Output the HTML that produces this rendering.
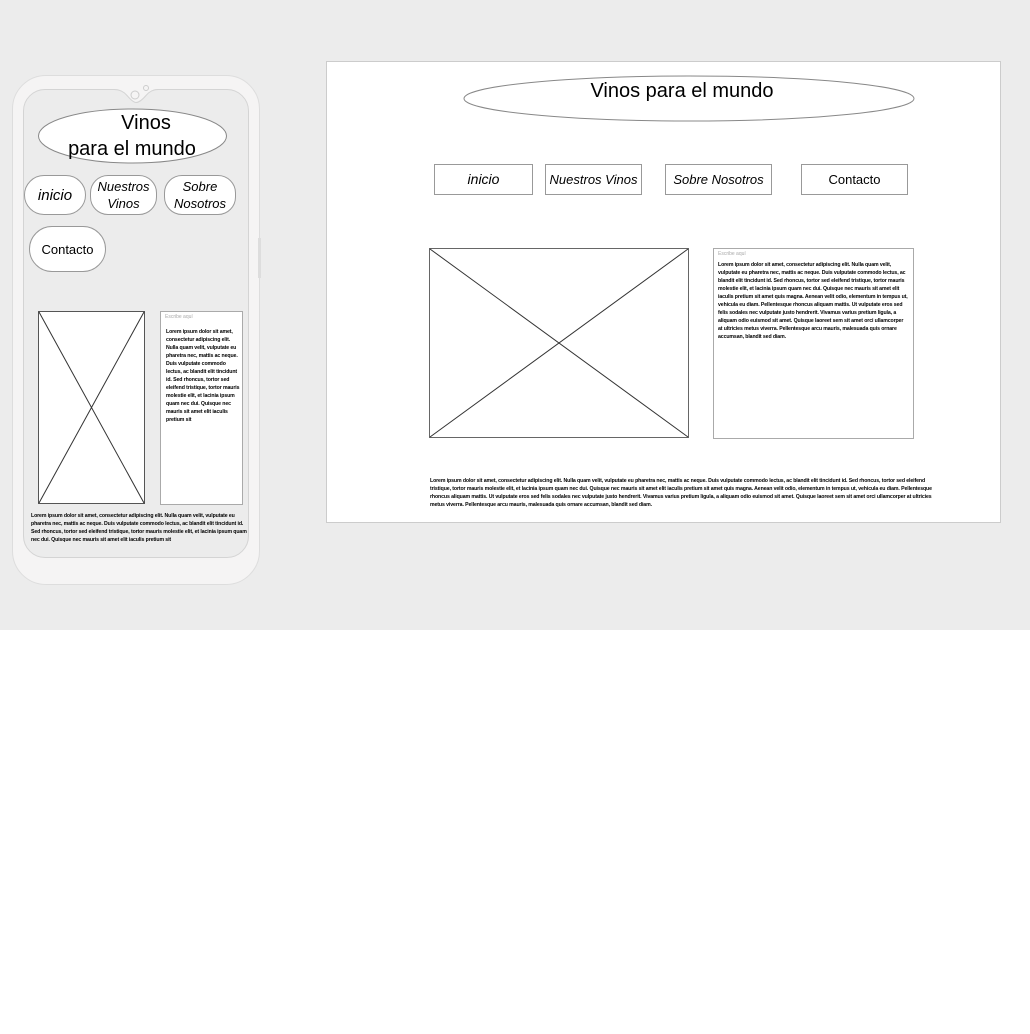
<!DOCTYPE html>
<html><head><meta charset="utf-8"><style>
*{margin:0;padding:0;box-sizing:border-box}
body{width:1030px;height:1034px;background:#fff;position:relative;overflow:hidden;font-family:"Liberation Sans",sans-serif;color:#000}
.a{position:absolute}
.btn{position:absolute;background:#fff;border:1px solid #999;display:flex;align-items:center;justify-content:center;text-align:center;line-height:17px}
.t{font-size:5.2px;font-weight:bold;line-height:8px;letter-spacing:-0.1px}
.ph{font-size:5px;color:#aaa;position:absolute;left:4px;top:2px}
</style></head><body>
<div class="a" style="left:0;top:0;width:1030px;height:630px;background:#ececec"></div>
<!-- phone -->
<div class="a" style="left:12px;top:75px;width:248px;height:510px;background:#f5f4f4;border:1px solid #ddd;border-radius:34px"></div>
<div class="a" style="left:258px;top:238px;width:3px;height:40px;background:#ddd"></div>
<div class="a" style="left:23px;top:89px;width:226px;height:469px;background:#ececec;border:1px solid #d4d4d4;border-radius:22px"></div>
<svg class="a" style="left:100px;top:80px" width="72" height="30"><path d="M0 9 L14 9 Q22 9 27 15 Q33 22 36 22 Q40 22 46 15 Q51 9 58 9 L72 9 L72 0 L0 0 Z" fill="#f5f4f4"/><path d="M0 9.5 L14 9.5 Q22 9.5 27 15.5 Q33 22.5 36 22.5 Q40 22.5 46 15.5 Q51 9.5 58 9.5 L72 9.5" fill="none" stroke="#d4d4d4"/><circle cx="35" cy="15" r="4" fill="none" stroke="#ccc"/><circle cx="46" cy="8" r="2.5" fill="none" stroke="#ccc"/></svg>
<svg class="a" style="left:37px;top:108px" width="191" height="57"><ellipse cx="95.5" cy="28" rx="94" ry="27" fill="#fff" stroke="#888"/></svg>
<div class="a" style="left:38px;top:110px;width:188px;text-align:center;font-size:20px;line-height:26px"><span style="padding-left:28px">Vinos</span><br>para el mundo</div>
<div class="btn" style="left:24px;top:175px;width:62px;height:40px;border-radius:20px;font-size:15px;font-style:italic">inicio</div>
<div class="btn" style="left:90px;top:175px;width:67px;height:40px;border-radius:18px;font-size:13px;font-style:italic">Nuestros<br>Vinos</div>
<div class="btn" style="left:164px;top:175px;width:72px;height:40px;border-radius:18px;font-size:13px;font-style:italic">Sobre<br>Nosotros</div>
<div class="btn" style="left:29px;top:226px;width:77px;height:46px;border-radius:23px;font-size:13px">Contacto</div>
<svg class="a" style="left:38px;top:311px" width="108" height="194"><rect x="0.5" y="0.5" width="106" height="192" fill="#fff" stroke="#555"/><path d="M1 1L106 192M106 1L1 192" stroke="#333"/></svg>
<div class="a" style="left:160px;top:311px;width:83px;height:194px;background:#fff;border:1px solid #aaa"><span class="ph">Escribe aquí</span><div class="t" style="position:absolute;left:5px;top:16px;width:75px">Lorem ipsum dolor sit amet, consectetur adipiscing elit. Nulla quam velit, vulputate eu pharetra nec, mattis ac neque. Duis vulputate commodo lectus, ac blandit elit tincidunt id. Sed rhoncus, tortor sed eleifend tristique, tortor mauris molestie elit, et lacinia ipsum quam nec dui. Quisque nec mauris sit amet elit iaculis pretium sit</div></div>
<div class="a t" style="left:31px;top:512px;width:220px">Lorem ipsum dolor sit amet, consectetur adipiscing elit. Nulla quam velit, vulputate eu pharetra nec, mattis ac neque. Duis vulputate commodo lectus, ac blandit elit tincidunt id. Sed rhoncus, tortor sed eleifend tristique, tortor mauris molestie elit, et lacinia ipsum quam nec dui. Quisque nec mauris sit amet elit iaculis pretium sit</div>
<!-- desktop -->
<div class="a" style="left:326px;top:61px;width:675px;height:462px;background:#fff;border:1px solid #ccc"></div>
<svg class="a" style="left:463px;top:75px" width="452" height="48"><ellipse cx="226" cy="23.5" rx="225" ry="22.5" fill="#fff" stroke="#888"/></svg>
<div class="a" style="left:463px;top:78px;width:438px;text-align:center;font-size:20px;line-height:26px">Vinos para el mundo</div>
<div class="btn" style="left:434px;top:164px;width:99px;height:31px;font-size:14px;font-style:italic">inicio</div>
<div class="btn" style="left:545px;top:164px;width:97px;height:31px;font-size:13px;font-style:italic">Nuestros Vinos</div>
<div class="btn" style="left:665px;top:164px;width:107px;height:31px;font-size:13px;font-style:italic">Sobre Nosotros</div>
<div class="btn" style="left:801px;top:164px;width:107px;height:31px;font-size:13px">Contacto</div>
<svg class="a" style="left:429px;top:248px" width="261" height="191"><rect x="0.5" y="0.5" width="259" height="189" fill="#fff" stroke="#666"/><path d="M1 1L259 189M259 1L1 189" stroke="#333"/></svg>
<div class="a" style="left:713px;top:248px;width:201px;height:191px;background:#fff;border:1px solid #aaa"><span class="ph">Escribe aquí</span><div class="t" style="position:absolute;left:4px;top:12px;width:190px">Lorem ipsum dolor sit amet, consectetur adipiscing elit. Nulla quam velit, vulputate eu pharetra nec, mattis ac neque. Duis vulputate commodo lectus, ac blandit elit tincidunt id. Sed rhoncus, tortor sed eleifend tristique, tortor mauris molestie elit, et lacinia ipsum quam nec dui. Quisque nec mauris sit amet elit iaculis pretium sit amet quis magna. Aenean velit odio, elementum in tempus ut, vehicula eu diam. Pellentesque rhoncus aliquam mattis. Ut vulputate eros sed felis sodales nec vulputate justo hendrerit. Vivamus varius pretium ligula, a aliquam odio euismod sit amet. Quisque laoreet sem sit amet orci ullamcorper at ultricies metus viverra. Pellentesque arcu mauris, malesuada quis ornare accumsan, blandit sed diam.</div></div>
<div class="a t" style="left:430px;top:477px;width:505px">Lorem ipsum dolor sit amet, consectetur adipiscing elit. Nulla quam velit, vulputate eu pharetra nec, mattis ac neque. Duis vulputate commodo lectus, ac blandit elit tincidunt id. Sed rhoncus, tortor sed eleifend tristique, tortor mauris molestie elit, et lacinia ipsum quam nec dui. Quisque nec mauris sit amet elit iaculis pretium sit amet quis magna. Aenean velit odio, elementum in tempus ut, vehicula eu diam. Pellentesque rhoncus aliquam mattis. Ut vulputate eros sed felis sodales nec vulputate justo hendrerit. Vivamus varius pretium ligula, a aliquam odio euismod sit amet. Quisque laoreet sem sit amet orci ullamcorper at ultricies metus viverra. Pellentesque arcu mauris, malesuada quis ornare accumsan, blandit sed diam.</div>
</body></html>
